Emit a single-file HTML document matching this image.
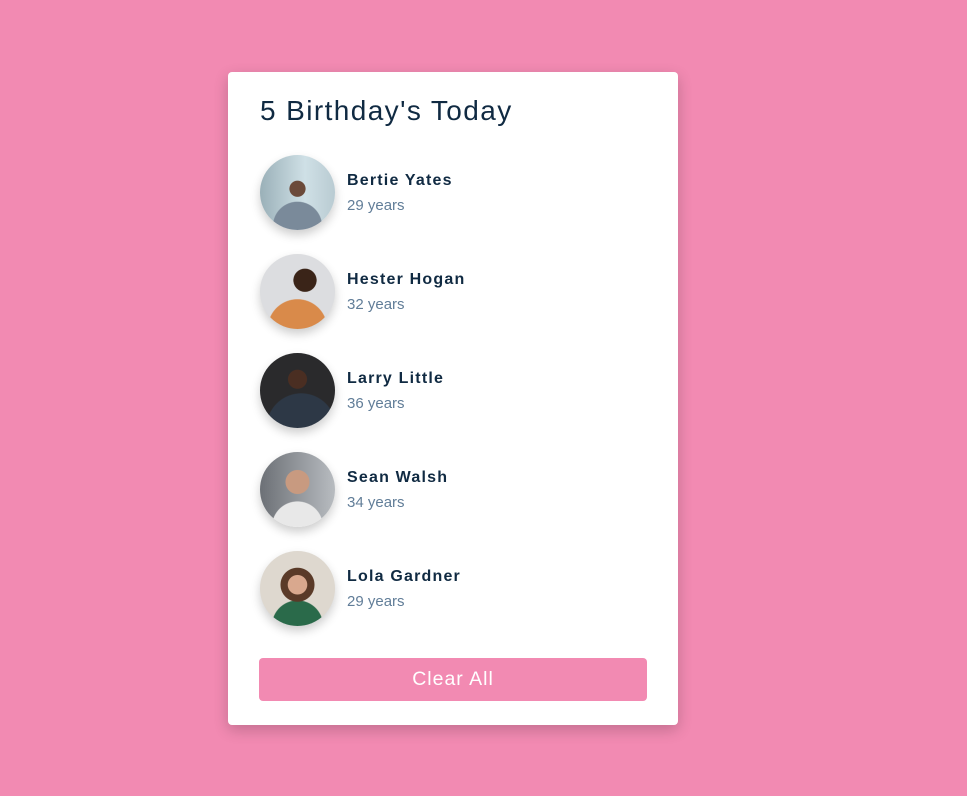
<!DOCTYPE html>
<html><head><style>
body{margin:0;background:#f28ab2;font-family:"Liberation Sans",sans-serif;width:967px;height:796px;position:relative;overflow:hidden}
.card{position:absolute;left:228px;top:72px;width:450px;height:653px;background:#fff;border-radius:4px;box-shadow:0 5px 15px rgba(0,0,0,0.2)}
h3{position:absolute;left:32px;top:23px;margin:0;font-weight:400;font-size:28px;letter-spacing:1.4px;color:#102a42}
.p{position:absolute;left:32px;width:400px;height:75px}
.av{position:absolute;left:0;top:0;width:75px;height:75px;border-radius:50%;box-shadow:0 5px 10px rgba(0,0,0,0.2);overflow:hidden}
.n{position:absolute;left:87px;top:17px;font-weight:700;font-size:16px;letter-spacing:1.2px;color:#102a42}
.y{position:absolute;left:87px;top:42px;font-size:15px;color:#617d98}
.btn{position:absolute;left:31px;top:586px;width:388px;height:43px;background:#f28ab2;border-radius:4px;color:#fff;font-size:19.5px;letter-spacing:1px;text-align:center;line-height:43px}
</style></head><body>
<div class="card">
<h3>5 Birthday's Today</h3>
<div class="p" style="top:83px"><div class="av" style="background:radial-gradient(circle at 50% 45%,#6b4a3a 0 14%,transparent 15%),radial-gradient(circle at 50% 95%,#7a8a9a 0 30%,transparent 31%),linear-gradient(90deg,#9ab0b8,#cfe0e6 60%,#b9cbd2)"></div><div class="n">Bertie Yates</div><div class="y">29 years</div></div>
<div class="p" style="top:182px"><div class="av" style="background:radial-gradient(circle at 60% 35%,#3a2418 0 17%,transparent 18%),radial-gradient(circle at 50% 100%,#d98a4a 0 35%,transparent 36%),#dcdde0"></div><div class="n">Hester Hogan</div><div class="y">32 years</div></div>
<div class="p" style="top:281px"><div class="av" style="background:radial-gradient(circle at 50% 35%,#4a2e22 0 15%,transparent 16%),radial-gradient(circle at 55% 100%,#2d3846 0 40%,transparent 41%),#2a2a2c"></div><div class="n">Larry Little</div><div class="y">36 years</div></div>
<div class="p" style="top:380px"><div class="av" style="background:radial-gradient(circle at 50% 40%,#c89a80 0 20%,transparent 21%),radial-gradient(circle at 50% 100%,#e8e8e8 0 30%,transparent 31%),linear-gradient(90deg,#6c7076,#b8bcc0)"></div><div class="n">Sean Walsh</div><div class="y">34 years</div></div>
<div class="p" style="top:479px"><div class="av" style="background:radial-gradient(circle at 50% 45%,#d9a88e 0 17%,transparent 18%),radial-gradient(circle at 50% 45%,#5a3a28 0 30%,transparent 31%),radial-gradient(circle at 50% 100%,#2a6a4a 0 30%,transparent 31%),#ded8cf"></div><div class="n">Lola Gardner</div><div class="y">29 years</div></div>
<div class="btn">Clear All</div>
</div>
</body></html>
